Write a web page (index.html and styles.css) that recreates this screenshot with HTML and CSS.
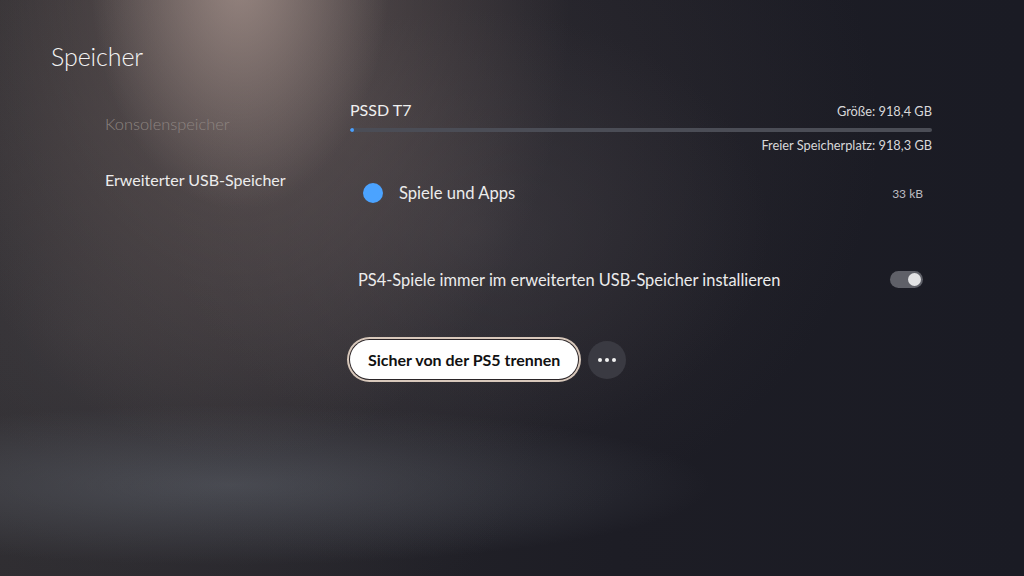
FILE: index.html
```html
<!DOCTYPE html>
<html lang="de">
<head>
<meta charset="utf-8">
<title>Speicher</title>
<link rel="stylesheet" href="styles.css">
</head>
<body>
<div class="screen">
  <h1 class="title">Speicher</h1>
  <div class="content">
    <nav class="sidebar">
      <div class="nav-item dim">Konsolenspeicher</div>
      <div class="nav-item">Erweiterter USB-Speicher</div>
    </nav>
    <main class="main">
      <div class="drive-head">
        <span class="drive-name">PSSD T7</span>
        <span class="meta">Größe: 918,4 GB</span>
      </div>
      <div class="bar"><div class="bar-fill" style="width:0.6%"></div></div>
      <div class="free meta">Freier Speicherplatz: 918,3 GB</div>
      <div class="item">
        <span class="dot"></span>
        <span class="item-label">Spiele und Apps</span>
        <span class="item-size">33 kB</span>
      </div>
      <div class="setting">
        <span class="setting-label">PS4-Spiele immer im erweiterten USB-Speicher installieren</span>
        <span class="toggle"><span class="knob"></span></span>
      </div>
      <div class="actions">
        <button class="primary">Sicher von der PS5 trennen</button>
        <button class="more"><span></span><span></span><span></span></button>
      </div>
    </main>
  </div>
</div>
</body>
</html>
```
FILE: styles.css
```css
* { box-sizing: border-box; }
html, body { margin: 0; padding: 0; }
body {
  width: 1024px;
  height: 576px;
  overflow: hidden;
  font-family: Lato, "Open Sans", "Liberation Sans", sans-serif;
  color: #f2f2f2;
  background-color: #1b1c25;
  background-image:
    radial-gradient(ellipse 150px 240px at 240px -30px, rgba(175,155,148,0.7), rgba(175,155,148,0) 100%),
    radial-gradient(ellipse 330px 460px at 240px 0px, rgba(120,104,100,0.6), rgba(120,104,100,0) 100%),
    radial-gradient(ellipse 300px 220px at 470px 230px, rgba(72,68,74,0.45), rgba(72,68,74,0) 100%),
    radial-gradient(ellipse 520px 430px at 360px 130px, rgba(70,64,68,0.45), rgba(70,64,68,0) 100%),
    radial-gradient(ellipse 480px 80px at 230px 485px, rgba(100,106,116,0.5), rgba(100,106,116,0) 100%),
    radial-gradient(ellipse 480px 420px at 80px 330px, rgba(70,66,70,0.55), rgba(70,66,70,0) 100%),
    linear-gradient(90deg, #29282c 0%, #1d1d25 60%, #1a1b24 100%);
}
.screen {
  padding: 40px 0 0 51px;
}
.title {
  margin: 0;
  font-weight: 300;
  font-size: 25px;
  line-height: 32px;
  color: #f4f4f4;
  letter-spacing: -0.1px;
}
.content {
  display: flex;
  margin-top: 28px;
}
.sidebar {
  width: 299px;
  padding: 12px 0 0 54px;
  display: flex;
  flex-direction: column;
  gap: 32px;
}
.nav-item {
  font-size: 16px;
  line-height: 24px;
  font-weight: 400;
  color: #ececec;
}
.nav-item.dim { color: #8d8480; font-weight: 300; font-size: 16.4px; }
.main {
  width: 582px;
  display: flex;
  flex-direction: column;
}
.drive-head {
  display: flex;
  justify-content: space-between;
  align-items: baseline;
  height: 20px;
}
.drive-name { font-size: 16px; line-height: 20px; color: #f0f0f0; }
.meta { font-size: 12.8px; line-height: 16px; color: #d8d8da; }
.bar {
  margin-top: 8px;
  height: 4px;
  border-radius: 2px;
  background: #4b4d56;
  overflow: hidden;
}
.bar-fill { height: 100%; background: #4aa0ff; border-radius: 2px; min-width: 4px; }
.free { margin-top: 5px; text-align: right; }
.item {
  margin-top: 28px;
  display: flex;
  align-items: center;
  height: 24px;
  padding: 0 9px 0 13px;
}
.dot {
  width: 20px; height: 20px; border-radius: 50%;
  background: #4ba3ff;
  flex: none;
}
.item-label { margin-left: 16px; font-size: 16.6px; color: #ececec; flex: 1; }
.item-size { font-size: 12px; color: #bdbdc2; }
.setting {
  margin-top: 62px;
  display: flex;
  align-items: center;
  height: 24px;
  padding: 0 9px 0 8px;
}
.setting-label { flex: 1; font-size: 16.4px; color: #ececec; }
.toggle {
  width: 33px; height: 17px; border-radius: 9px;
  background: #5f6068;
  display: flex; align-items: center; justify-content: flex-end;
  padding-right: 2px;
}
.knob { width: 13px; height: 13px; border-radius: 50%; background: #e2e2e4; }
.actions {
  margin-top: 49px;
  display: flex;
  align-items: center;
  gap: 10px;
}
.primary {
  height: 39px;
  padding: 0 18px;
  border: none;
  border-radius: 20px;
  background: #ffffff;
  color: #111;
  font-family: inherit;
  font-size: 16px;
  font-weight: 700;
  box-shadow: 0 0 0 1px #2a2427, 0 0 0 3px #d8c8bb;
}
.more {
  width: 38px; height: 38px;
  border: none; border-radius: 50%;
  background: #3a3a42;
  display: flex; align-items: center; justify-content: center;
  gap: 3px; padding: 0;
}
.more span { width: 4px; height: 4px; border-radius: 50%; background: #f2f2f2; }
```
